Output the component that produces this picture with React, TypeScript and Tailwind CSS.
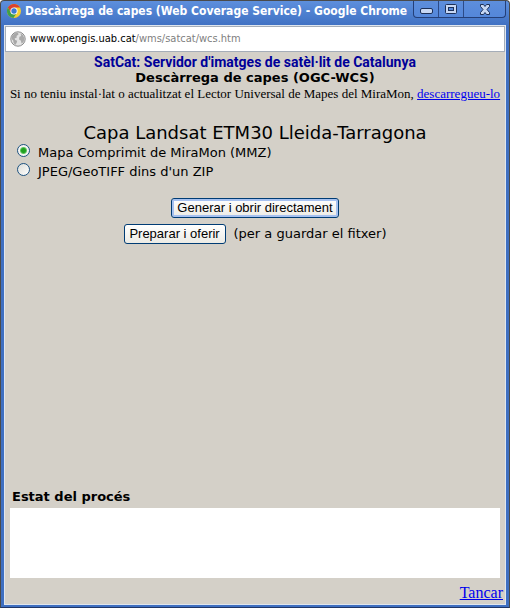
import React from "react";

function ChromeLogo() {
  return (
    <svg className="size-4 shrink-0" viewBox="0 0 16 16" aria-hidden="true">
      <circle cx="8" cy="8" r="7" fill="#f5cf31" />
      <path d="M8 4.6H14.1A7 7 0 0 0 1.9 4.6L5 9.7Z" fill="#d9412f" />
      <path d="M1.9 4.6A7 7 0 0 0 7.4 15L10.6 10.2 8 11.4 5 9.7Z" fill="#3f9f48" />
      <circle cx="8" cy="8" r="3.6" fill="#fff" />
      <circle cx="8" cy="8" r="2.7" fill="#3c7bd0" />
    </svg>
  );
}

function GlobeIcon() {
  return (
    <svg className="size-4 shrink-0" viewBox="0 0 16 16" aria-hidden="true">
      <circle cx="8" cy="8" r="7.2" fill="#e4e4e4" stroke="#8c8c8c" />
      <path d="M2 5 4.5 2.3 8 1.8 8.5 3.5 6.5 5 6.8 6.6 4.6 7.4 5.2 9 7.2 9.8 6.6 12 5.2 14 3.6 12 3.2 9.4 1.6 8Z" fill="#a8a8a8" />
      <path d="M10.4 2.2 13 4 14.4 7.4 13.6 11 11.6 12.6 10.8 9.6 9 8.4 9.4 5.8 11.2 5Z" fill="#aaa" />
    </svg>
  );
}

function WindowControls() {
  const cell = "flex h-4 items-center justify-center";
  return (
    <div className="flex h-[17px] shrink-0 self-start rounded-b border border-t-0 border-[#243f78] bg-linear-to-b from-[#5d8edc] to-[#5487da]">
      <button type="button" aria-label="Minimitza" className={`${cell} w-[25px] border-r border-[#2c4b88] pt-1`}>
        <svg width="13" height="6" viewBox="0 0 13 6">
          <rect x=".5" y=".5" width="12" height="5" rx="1.5" fill="#c7d7f3" stroke="#1d3058" />
        </svg>
      </button>
      <button type="button" aria-label="Maximitza" className={`${cell} w-[25px] border-r border-[#2c4b88]`}>
        <svg width="12" height="10" viewBox="0 0 12 10">
          <rect x=".5" y=".5" width="11" height="9" rx="1" fill="#c7d7f3" stroke="#1d3058" />
          <rect x="3.5" y="3.5" width="5" height="3" fill="#5487da" stroke="#1d3058" />
        </svg>
      </button>
      <button type="button" aria-label="Tanca la finestra" className={`${cell} w-[41px]`}>
        <svg width="12" height="11" viewBox="0 0 12 11">
          <path d="M1.5.5H4.5L6 2.5 7.5.5H10.5V2.5L8 5.5 10.5 8.5V10.5H7.5L6 8.5 4.5 10.5H1.5V8.5L4 5.5 1.5 2.5Z" fill="#c7d7f3" stroke="#1d3058" />
        </svg>
      </button>
    </div>
  );
}

function TitleBar() {
  return (
    <header className="flex h-6 items-start">
      <div className="flex min-w-0 flex-1 items-center gap-[3px] pt-[2px]">
        <ChromeLogo />
        <h1 className="min-w-0 flex-1 overflow-hidden whitespace-nowrap font-['DejaVu_Sans_Condensed','DejaVu_Sans',sans-serif] text-xs font-bold text-white">
          Descàrrega de capes (Web Coverage Service) - Google Chrome
        </h1>
      </div>
      <WindowControls />
    </header>
  );
}

function AddressBar() {
  return (
    <div className="flex h-[26px] items-center gap-1 border border-[#a5adb8] bg-white px-1">
      <GlobeIcon />
      <p className="font-['DejaVu_Sans_Condensed','DejaVu_Sans',sans-serif] text-[11px] leading-4 text-black">
        www.opengis.uab.cat<span className="text-[#808080]">/wms/satcat/wcs.htm</span>
      </p>
    </div>
  );
}

function FormatOption({ id, label, checked }: { id: string; label: string; checked?: boolean }) {
  return (
    <div className="flex h-[19px] items-start">
      <input
        id={id}
        type="radio"
        name="format"
        defaultChecked={checked}
        className="size-[13px] appearance-none rounded-full border border-[#1d5281] bg-linear-to-br from-[#dcdcd7] to-white checked:bg-[radial-gradient(circle,#21a121_0_2px,#5fc45f_3px,#f4f4f2_4px)]"
      />
      <label htmlFor={id} className="pl-2 text-[13px] leading-[18px]">
        {label}
      </label>
    </div>
  );
}

export default function App() {
  const button =
    "h-5 rounded-[3px] border border-[#003c74] bg-linear-to-b from-white to-[#ecebe5] font-['Liberation_Sans',Arial,sans-serif] text-[13px] leading-[18px]";
  return (
    <div className="flex min-h-screen flex-col rounded-t border border-[#4a4a4a] border-b-[#1f3566] bg-linear-to-b from-[#5d8fdd] to-[#3e6fc1] to-[26px] px-[3px] pb-[2px] text-black">
      <div className="pl-[2px]">
        <TitleBar />
      </div>
      <div className="flex flex-1 flex-col border border-[#dfe6ef] bg-[#d4d0c8]">
        <AddressBar />
        <main className="flex flex-1 flex-col font-['DejaVu_Sans',Verdana,sans-serif]">
          <div className="pt-[2px] text-center">
            <h2 className="font-[Roboto,'Liberation_Sans',Arial,sans-serif] text-sm leading-4 font-bold text-[#000099]">
              SatCat: Servidor d'imatges de satèl·lit de Catalunya
            </h2>
            <h3 className="text-[13px] leading-4 font-bold">Descàrrega de capes (OGC-WCS)</h3>
            <p className="whitespace-nowrap font-['Liberation_Serif','Times_New_Roman',serif] text-[13px] leading-4">
              Si no teniu instal·lat o actualitzat el Lector Universal de Mapes del MiraMon,{" "}
              <a href="#descarrega" className="text-[#0000ee] underline">
                descarregueu-lo
              </a>
            </p>
          </div>
          <form className="mt-5" onSubmit={(e) => e.preventDefault()}>
            <h4 className="text-center text-lg leading-[22px]">Capa Landsat ETM30 Lleida-Tarragona</h4>
            <div className="pl-3">
              <FormatOption id="mmz" label="Mapa Comprimit de MiraMon (MMZ)" checked />
              <FormatOption id="zip" label="JPEG/GeoTIFF dins d'un ZIP" />
            </div>
            <div className="mt-4 flex flex-col items-center gap-[6px]">
              <button type="submit" className={`${button} w-[168px] shadow-[inset_0_0_0_2px_#a6c1f0]`}>
                Generar i obrir directament
              </button>
              <div className="flex items-center gap-2">
                <button type="button" className={`${button} w-[102px]`}>
                  Preparar i oferir
                </button>
                <span className="text-[13px] leading-5">(per a guardar el fitxer)</span>
              </div>
            </div>
          </form>
          <section className="mt-auto px-[5px]">
            <label htmlFor="status" className="block pl-[2px] text-[13px] leading-[22px] font-bold">
              Estat del procés
            </label>
            <textarea id="status" readOnly className="block h-[70px] w-full resize-none bg-white outline-none" />
          </section>
          <footer className="flex h-[26px] items-center justify-end px-[2px] pt-1">
            <a href="#tancar" className="font-['Liberation_Serif','Times_New_Roman',serif] text-base leading-5 text-[#0000ee] underline">
              Tancar
            </a>
          </footer>
        </main>
      </div>
    </div>
  );
}
